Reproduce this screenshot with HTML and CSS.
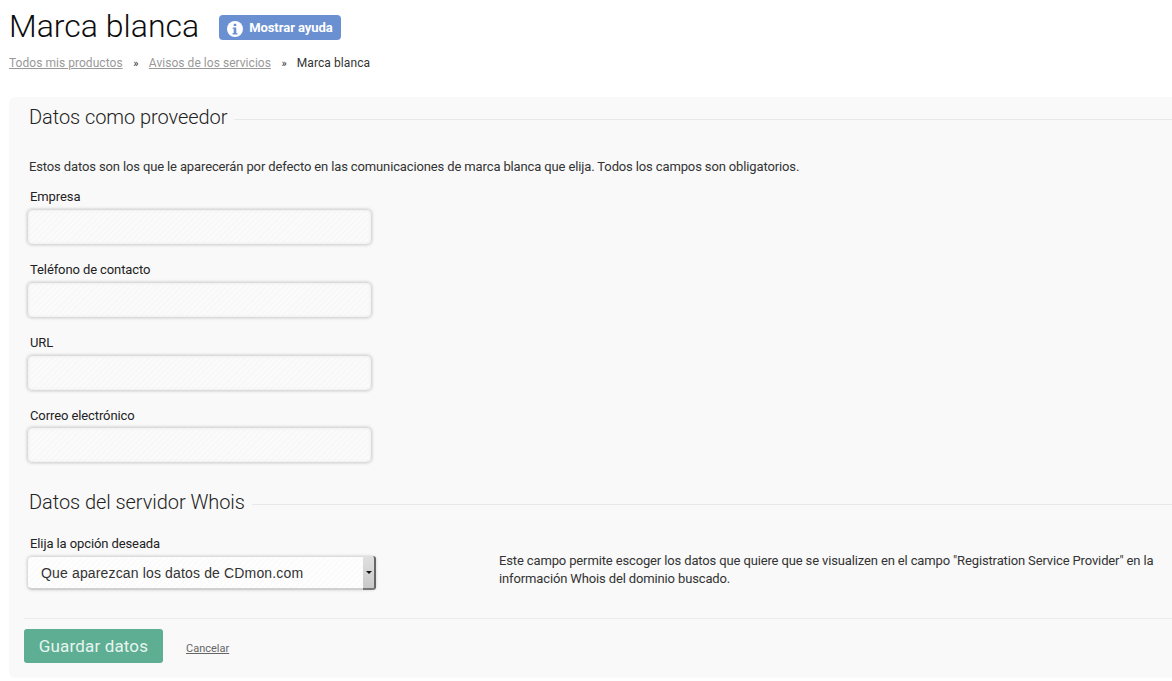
FILE: index.html
```html
<!DOCTYPE html>
<html lang="es">
<head>
<meta charset="utf-8">
<title>Marca blanca</title>
<link rel="stylesheet" href="styles.css">
</head>
<body>
<header class="head">
  <h1 class="title">Marca blanca</h1>
  <button class="help" type="button">
    <svg class="help-icon" viewBox="0 0 16 16" width="16" height="16"><circle cx="8" cy="8" r="8" fill="#fff"/><rect x="6.7" y="2.8" width="2.6" height="2.2" fill="#6a90d2"/><path d="M5.6 6.4h3.7v5.6h1.1v1.4H5.6V12h1.1V7.8H5.6z" fill="#6a90d2"/></svg>
    <span>Mostrar ayuda</span>
  </button>
</header>
<nav class="crumbs">
  <a href="#">Todos mis productos</a><span class="sep">»</span><a href="#">Avisos de los servicios</a><span class="sep">»</span><span class="here">Marca blanca</span>
</nav>
<main class="panel">
  <section class="sec">
    <h2 class="legend"><span>Datos como proveedor</span></h2>
    <p class="intro">Estos datos son los que le aparecerán por defecto en las comunicaciones de marca blanca que elija. Todos los campos son obligatorios.</p>
    <div class="field"><label class="lab">Empresa</label><input class="inp" type="text"></div>
    <div class="field"><label class="lab">Teléfono de contacto</label><input class="inp" type="text"></div>
    <div class="field"><label class="lab">URL</label><input class="inp" type="text"></div>
    <div class="field field-last"><label class="lab">Correo electrónico</label><input class="inp" type="text"></div>
  </section>
  <section class="sec sec-whois">
    <h2 class="legend"><span>Datos del servidor Whois</span></h2>
    <div class="whois-row">
      <div class="whois-col">
        <label class="lab">Elija la opción deseada</label>
        <div class="select">
          <span class="select-val">Que aparezcan los datos de CDmon.com</span>
          <span class="select-btn"><i class="caret"></i></span>
        </div>
      </div>
      <p class="whois-note">Este campo permite escoger los datos que quiere que se visualizen en el campo "Registration Service Provider" en la información Whois del dominio buscado.</p>
    </div>
  </section>
  <footer class="actions">
    <button class="save" type="button">Guardar datos</button>
    <a class="cancel" href="#">Cancelar</a>
  </footer>
</main>
</body>
</html>
```
FILE: styles.css
```css
* { box-sizing: border-box; }
html, body { margin: 0; padding: 0; }
body {
  background: #fff;
  color: #333;
  font-family: Roboto, "Liberation Sans", sans-serif;
  font-size: 13px;
  height: 681px;
  overflow: hidden;
  padding-left: 9px;
}
.head { display: flex; align-items: center; height: 52px; }
.title {
  margin: 0;
  font-size: 32px;
  font-weight: 300;
  color: #0c0c0c;
  line-height: 52px;
}
.help {
  display: flex;
  align-items: center;
  gap: 6px;
  margin: 3px 0 0 20px;
  width: 122px;
  height: 25px;
  padding: 0 0 0 8px;
  border: 0;
  border-radius: 4px;
  background: #6a90d2;
  color: #fff;
  font: 700 13px Roboto, sans-serif;
  letter-spacing: -.05px;
}
.help-icon { margin-top: 2px; flex: none; }
.crumbs {
  display: flex;
  align-items: center;
  height: 20px;
  padding-top: 2px;
  font-size: 12px;
  letter-spacing: .04px;
  color: #333;
}
.crumbs a { color: #999; text-decoration: underline; }
.sep { margin: 0 10.5px; color: #333; font-size: 11px; }
.here { letter-spacing: .1px; margin-left: -.5px; }
.panel {
  margin-top: 25px;
  height: 581px;
  background: #f9f9f9;
  border-radius: 6px 0 0 6px;
}
.sec { padding-left: 20px; }
.legend {
  display: flex;
  align-items: center;
  gap: 7px;
  margin: 0;
  height: 40px;
  font-size: 20px;
  font-weight: 300;
  letter-spacing: -.06px;
  color: #222;
}
.legend::after { content: ""; flex: 1; height: 1px; margin-top: 4px; background: #e9e9e9; }
.intro {
  margin: 22px 0 0;
  height: 16px;
  line-height: 16px;
  font-size: 13px;
  letter-spacing: -.13px;
  color: #333;
}
.field { height: 73px; }
.intro + .field { margin-top: 13px; }
.field-last { height: 72px; }
.field-last .inp { margin-top: 3px; }
.lab {
  display: block;
  margin-left: 1px;
  height: 17px;
  line-height: 15px;
  padding-top: 1px;
  font-size: 13px;
  letter-spacing: -.1px;
  color: #222;
}
.inp {
  display: block;
  margin: 4px 0 0 -2px;
  width: 345px;
  height: 36px;
  border: 1px solid #dcdcdc;
  border-radius: 5px;
  background: repeating-linear-gradient(135deg, #fbfbfb 0 2px, #f8f8f8 2px 4px);
  box-shadow: 0 0 3px #c2c2c2, inset 0 0 3px #e4e4e4;
  outline: 0;
}
.sec-whois { margin-top: 3px; }
.whois-row { display: flex; align-items: flex-start; margin-top: 13px; }
.whois-col { width: 470px; flex: none; }
.select {
  display: flex;
  margin: 4px 0 0 -2px;
  width: 349px;
  height: 34px;
  border: 1px solid #dcdcdc;
  border-bottom: 2px solid #d0d0d0;
  border-radius: 5px;
  background: repeating-linear-gradient(135deg, #fefefe 0 2px, #fbfbfb 2px 4px);
  box-shadow: 0 0 3px #c8c8c8;
}
.select-val {
  flex: 1;
  padding-left: 13px;
  font: 14px/33px "Liberation Sans", Arial, sans-serif;
  letter-spacing: .15px;
  color: #333;
}
.select-btn {
  display: flex;
  align-items: center;
  justify-content: center;
  width: 13px;
  margin: -1px -1px -2px 0;
  background: linear-gradient(#e0e0e0, #c9c9c9);
  border-right: 2px solid #666;
  border-bottom: 2px solid #777;
  border-radius: 0 3px 3px 0;
}
.caret {
  display: block;
  width: 0;
  height: 0;
  border-left: 3px solid transparent;
  border-right: 3px solid transparent;
  border-top: 3px solid #111;
}
.whois-note {
  margin: 17px 0 0;
  width: 660px;
  font-size: 13px;
  line-height: 18px;
  letter-spacing: -.135px;
  color: #333;
}
.actions {
  display: flex;
  align-items: center;
  margin: 28px 0 0 15px;
  padding-top: 10px;
  border-top: 1px solid #ececec;
}
.save {
  width: 139px;
  height: 34px;
  border: 0;
  border-radius: 3px;
  background: #5dae92;
  color: #e8f5f0;
  font: 400 17px Roboto, sans-serif;
  letter-spacing: .15px;
}
.cancel { margin: 5px 0 0 23px; color: #666; font-size: 11px; text-decoration: underline; }
```
